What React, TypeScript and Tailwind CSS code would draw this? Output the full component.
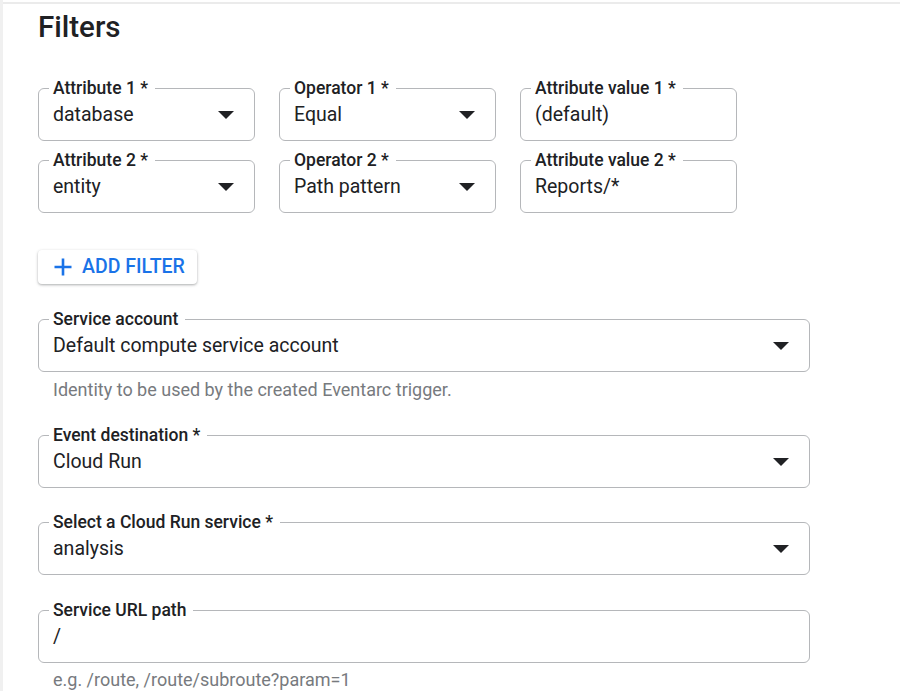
import React from "react"

function Arrow() {
  return (
    <svg width="16" height="8" viewBox="0 0 16 8" className="shrink-0">
      <path d="M0 0h16L8 8z" fill="#202124" />
    </svg>
  )
}

type FieldProps = {
  label: string
  value: string
  select?: boolean
  className?: string
}

function Field({ label, value, select, className = "" }: FieldProps) {
  return (
    <fieldset
      className={`rounded-[6px] border border-[#b5b7ba] pl-[14px] pr-[20px] pb-[6px] ${className}`}
    >
      <legend className="-ml-[4px] pl-[4px] pr-[7px] text-[17.5px] leading-[16px] font-medium text-[#202124]">
        {label}
      </legend>
      <div className="flex h-[38px] items-center justify-between">
        <span className="text-[19.5px] text-[#202124]">{value}</span>
        {select && <Arrow />}
      </div>
    </fieldset>
  )
}

const filters = [
  [
    { label: "Attribute 1 *", value: "database", select: true },
    { label: "Operator 1 *", value: "Equal", select: true },
    { label: "Attribute value 1 *", value: "(default)", select: false },
  ],
  [
    { label: "Attribute 2 *", value: "entity", select: true },
    { label: "Operator 2 *", value: "Path pattern", select: true },
    { label: "Attribute value 2 *", value: "Reports/*", select: false },
  ],
]

export default function App() {
  return (
    <div className="flex min-h-[691px] bg-white font-['Roboto',sans-serif]">
      <div className="w-[3px] shrink-0 bg-[#f0f0f0]" />
      <div className="flex-1 pt-[2px]">
        <div className="border-t-2 border-[#ebebeb] pl-[35px] pt-[5px]">
          {/* Heading */}
          <h2 className="text-[29.5px] leading-[36px] font-medium text-[#202124]">Filters</h2>

          {/* Filter rows */}
          <div className="mt-[35px] flex flex-col gap-[11px]">
            {filters.map((row, i) => (
              <div key={i} className="grid grid-cols-[217px_217px_217px] gap-x-[24px]">
                {row.map((f) => (
                  <Field key={f.label} label={f.label} value={f.value} select={f.select} />
                ))}
              </div>
            ))}
          </div>

          {/* Add filter */}
          <button className="mt-[37px] flex h-[34px] items-center gap-[9px] rounded-[4px] bg-white pl-[15px] pr-[12px] text-[19.5px] font-medium text-[#1a73e8] shadow-[0_1px_3px_rgba(60,64,67,0.3),0_1px_2px_rgba(60,64,67,0.15)]">
            <svg width="20" height="20" viewBox="0 0 20 20">
              <path d="M10 1.5v17M1.5 10h17" stroke="#1a73e8" strokeWidth="2.6" />
            </svg>
            ADD FILTER
          </button>

          <div className="mt-[27px] w-[772px]">
            <Field label="Service account" value="Default compute service account" select />
            <p className="mt-[8px] pl-[15px] text-[18px] leading-[20px] text-[#777a7e]">
              Identity to be used by the created Eventarc trigger.
            </p>

            <Field className="mt-[27px]" label="Event destination *" value="Cloud Run" select />
            <Field className="mt-[26px]" label="Select a Cloud Run service *" value="analysis" select />
            <Field className="mt-[27px]" label="Service URL path" value="/" />
            <p className="mt-[7px] pl-[15px] text-[18px] leading-[20px] text-[#777a7e]">
              e.g. /route, /route/subroute?param=1
            </p>
          </div>
        </div>
      </div>
    </div>
  )
}
